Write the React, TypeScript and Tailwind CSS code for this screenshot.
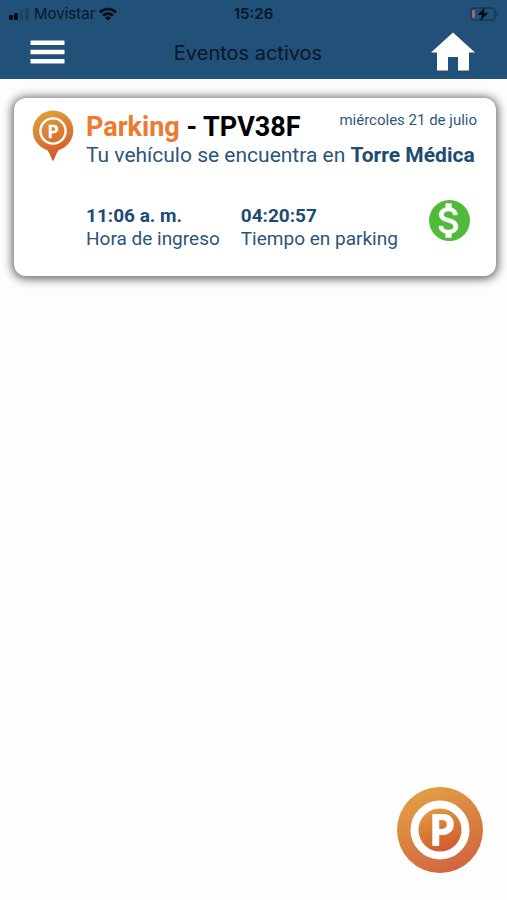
import React from 'react';
import { MdAttachMoney } from 'react-icons/md';

interface ParkingEvent {
  plate: string;
  place: string;
  date: string;
  entryTime: string;
  elapsed: string;
}

const EVENTS: ParkingEvent[] = [
  {
    plate: 'TPV38F',
    place: 'Torre Médica',
    date: 'miércoles 21 de julio',
    entryTime: '11:06 a. m.',
    elapsed: '04:20:57',
  },
];

function StatusBar() {
  return (
    <div className="grid grid-cols-3 items-center h-7 px-2 font-[Inter,sans-serif] text-[#071826]">
      <div className="flex items-center gap-1">
        <svg className="w-[22px] h-3" viewBox="0 0 22 12" aria-hidden="true">
          <rect x="1" y="7" width="4" height="5" rx="1" fill="#040c14" />
          <rect x="6" y="5" width="4" height="7" rx="1" fill="#040c14" />
          <rect x="12" y="2" width="3" height="10" rx="1" fill="#1b4265" />
          <rect x="17" y="0" width="4" height="12" rx="1" fill="#1b4265" />
        </svg>
        <span className="text-[15px] leading-5">Movistar</span>
        <svg className="w-[18px] h-[14px]" viewBox="0 0 18 14" aria-hidden="true">
          <g fill="none" stroke="#040c14" strokeWidth="2.6">
            <path d="M1 5.2C5.4 .9 12.6 .9 17 5.2" />
            <path d="M4.1 8.6C6.8 6 11.2 6 13.9 8.6" />
          </g>
          <path d="M9 13.8 6 10.8C7.6 9.2 10.4 9.2 12 10.8Z" fill="#040c14" />
        </svg>
      </div>
      <span className="text-[15px] leading-5 font-semibold text-center">15:26</span>
      <svg className="justify-self-end w-[29px] h-[14px]" viewBox="0 0 29 14" aria-hidden="true">
        <rect x="1" y="1" width="24" height="12" rx="3" fill="none" stroke="#173a58" strokeWidth="1.3" />
        <rect x="2" y="3" width="3" height="8" rx="1" fill="#b0616e" />
        <path d="M26.5 4.5v5c2.4-1 2.4-4 0-5Z" fill="#173a58" />
        <path d="M15 0 7.5 8h4.6L10 14 18.3 5.7h-4.8Z" fill="#040c14" />
      </svg>
    </div>
  );
}

function Header() {
  return (
    <header className="bg-[#215079]">
      <StatusBar />
      <div className="flex items-center justify-between h-[51px] pl-[30px] pr-8 pb-1">
        <button type="button" aria-label="Menú">
          <svg className="w-[35px] h-6" viewBox="0 0 35 24" fill="#fff">
            <rect x="0.5" y="0.5" width="34" height="4.5" rx="0.5" />
            <rect x="0.5" y="9.7" width="34" height="4.5" rx="0.5" />
            <rect x="0.5" y="19" width="34" height="4.5" rx="0.5" />
          </svg>
        </button>
        <h1 className="pt-0.5 text-xl font-[Inter,sans-serif] text-[#071826]">Eventos activos</h1>
        <a href="#inicio" aria-label="Inicio">
          <svg className="w-11 h-[39px]" viewBox="0 0 44 39" fill="#fff">
            <path d="M22 0.5 44 20.5H38V38.5H27V25H17V38.5H6V20.5H0Z" />
          </svg>
        </a>
      </div>
    </header>
  );
}

function ParkingPin() {
  return (
    <svg className="w-[42px] h-[52px] shrink-0" viewBox="0 0 42 52" aria-hidden="true">
      <defs>
        <linearGradient id="pin" x1="0.3" y1="0" x2="0.6" y2="1">
          <stop offset="0" stopColor="#e0a03c" />
          <stop offset="0.8" stopColor="#d8622f" />
          <stop offset="1" stopColor="#d4502d" />
        </linearGradient>
      </defs>
      <path
        d="M21 0.5A20.3 20.3 0 0 0 .7 20.8C.7 30 7 37.4 15.5 40.2 17.6 43 19 47.5 21 51.5 23 47.5 24.4 43 26.5 40.2 35 37.4 41.3 30 41.3 20.8A20.3 20.3 0 0 0 21 .5Z"
        fill="url(#pin)"
      />
      <circle cx="21" cy="21" r="12.6" fill="none" stroke="#fff" strokeWidth="2.4" />
      <text
        x="21"
        y="27.5"
        textAnchor="middle"
        fontFamily="Open Sans, sans-serif"
        fontWeight="600"
        fontSize="18"
        fill="#fff"
        stroke="#fff"
        strokeWidth="0.6"
        strokeLinejoin="round"
      >
        P
      </text>
    </svg>
  );
}

function EventCard({ event }: { event: ParkingEvent }) {
  return (
    <article className="flex gap-3 pt-3 pb-[26px] pl-[18px] pr-[19px] rounded-xl bg-white shadow-[0_1px_10px_2px_rgba(0,0,0,0.6)]">
      <ParkingPin />
      <div className="grow min-w-0">
        <div className="flex items-start justify-between">
          <h2 className="pt-px text-[27px] leading-8 font-bold text-black whitespace-nowrap">
            <span className="text-[#ee7a30]">Parking</span> - {event.plate}
          </h2>
          <time className="text-[15px] leading-5 text-[#2f587e] whitespace-nowrap">{event.date}</time>
        </div>
        <p className="text-[21px] leading-6 text-[#2a557c]">
          Tu vehículo se encuentra en <strong className="text-[#1d4b73]">{event.place}</strong>
        </p>
        <div className="flex items-start justify-between mt-[33px] pr-[7px]">
          <dl className="flex gap-[21px] mt-1 text-[19px] leading-[23px] text-[#2a557c]">
            <div className="flex flex-col-reverse">
              <dt>Hora de ingreso</dt>
              <dd className="font-bold text-[#1d4b73]">{event.entryTime}</dd>
            </div>
            <div className="flex flex-col-reverse">
              <dt>Tiempo en parking</dt>
              <dd className="font-bold text-[#1d4b73]">{event.elapsed}</dd>
            </div>
          </dl>
          <button
            type="button"
            aria-label="Pagar"
            className="flex items-center justify-center size-[41px] shrink-0 rounded-full bg-[#50bb38]"
          >
            <MdAttachMoney className="size-[45px] shrink-0 text-white" stroke="#fff" strokeWidth="0.3" />
          </button>
        </div>
      </div>
    </article>
  );
}

function ParkingButton() {
  return (
    <button type="button" aria-label="Parking" className="fixed right-6 bottom-[27px] rounded-full">
      <svg className="size-[86px]" viewBox="0 0 86 86">
        <defs>
          <linearGradient id="fabRing" x1="0.25" y1="0" x2="0.7" y2="1">
            <stop offset="0" stopColor="#e3a044" />
            <stop offset="1" stopColor="#d06440" />
          </linearGradient>
          <linearGradient id="fabCore" x1="0.3" y1="0" x2="0.65" y2="1">
            <stop offset="0" stopColor="#dfa03f" />
            <stop offset="1" stopColor="#d0532f" />
          </linearGradient>
        </defs>
        <circle cx="43" cy="43" r="43" fill="url(#fabRing)" />
        <circle cx="43" cy="43" r="25.5" fill="url(#fabCore)" stroke="#fff" strokeWidth="8" />
        <text
          x="45"
          y="58"
          textAnchor="middle"
          fontFamily="Open Sans, sans-serif"
          fontWeight="600"
          fontSize="41"
          fill="#fff"
          stroke="#fff"
          strokeWidth="2"
          strokeLinejoin="round"
        >
          P
        </text>
      </svg>
    </button>
  );
}

export default function App() {
  return (
    <div className="min-h-screen bg-[#fdfdfd] font-[Roboto,sans-serif]">
      <Header />
      <main className="flex flex-col gap-6 pt-[19px] pl-[14px] pr-[11px]">
        {EVENTS.map((event) => (
          <EventCard key={event.plate} event={event} />
        ))}
      </main>
      <ParkingButton />
    </div>
  );
}
